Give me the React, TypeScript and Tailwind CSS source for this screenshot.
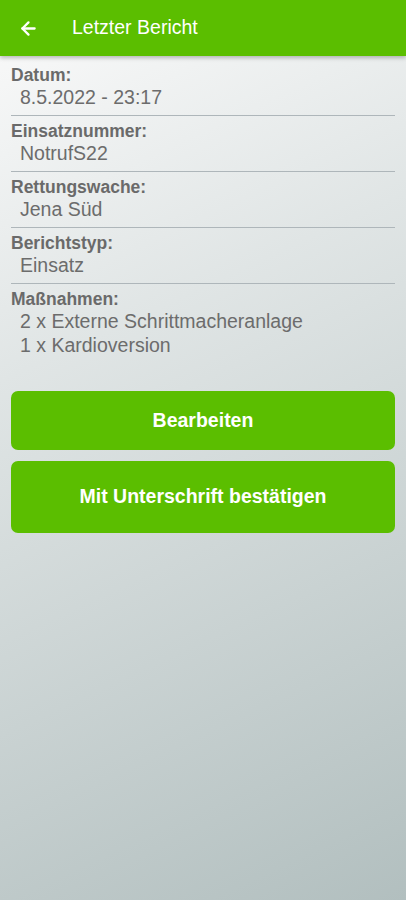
import { ArrowLeft } from "lucide-react";

const fields = [
  { label: "Datum:", values: ["8.5.2022 - 23:17"] },
  { label: "Einsatznummer:", values: ["NotrufS22"] },
  { label: "Rettungswache:", values: ["Jena Süd"] },
  { label: "Berichtstyp:", values: ["Einsatz"] },
  { label: "Maßnahmen:", values: ["2 x Externe Schrittmacheranlage", "1 x Kardioversion"] },
];

export default function App() {
  return (
    <div
      className="flex h-[900px] w-full flex-col bg-[linear-gradient(155deg,#fbfbfb_0%,#e0e5e5_35%,#b2bfbf_100%)]"
      style={{ fontFamily: '"Liberation Sans", Arial, sans-serif' }}
    >
      {/* Header */}
      <header className="z-10 flex h-[56px] items-center bg-[#5bbe00] px-[18px] shadow-[0_2px_4px_rgba(0,0,0,0.25)]">
        <ArrowLeft className="h-[21px] w-[21px] text-white" strokeWidth={2.6} />
        <h1 className="ml-[33px] text-[19.5px] text-white">Letzter Bericht</h1>
      </header>

      {/* Details */}
      <div className="px-[11px] pt-[4px]">
        {fields.map((f, i) => (
          <div
            key={f.label}
            className={
              i < fields.length - 1
                ? "border-b border-[#aeb6ba] pb-[6px] pt-[5px]"
                : "pb-[6px] pt-[5px]"
            }
          >
            <div className="text-[17.5px] font-bold leading-[20px] text-[#6a6a6a]">{f.label}</div>
            {f.values.map((v) => (
              <div key={v} className="pl-[9px] text-[19.5px] leading-[24px] text-[#6c6c6c]">
                {v}
              </div>
            ))}
          </div>
        ))}
      </div>

      {/* Buttons */}
      <div className="mt-[28px] flex flex-col gap-[11px] px-[11px]">
        <button className="h-[59px] rounded-[7px] bg-[#5bbe00] text-[19.5px] font-bold text-white">
          Bearbeiten
        </button>
        <button className="h-[72px] rounded-[7px] bg-[#5bbe00] text-[19.5px] font-bold text-white">
          Mit Unterschrift bestätigen
        </button>
      </div>
    </div>
  );
}
